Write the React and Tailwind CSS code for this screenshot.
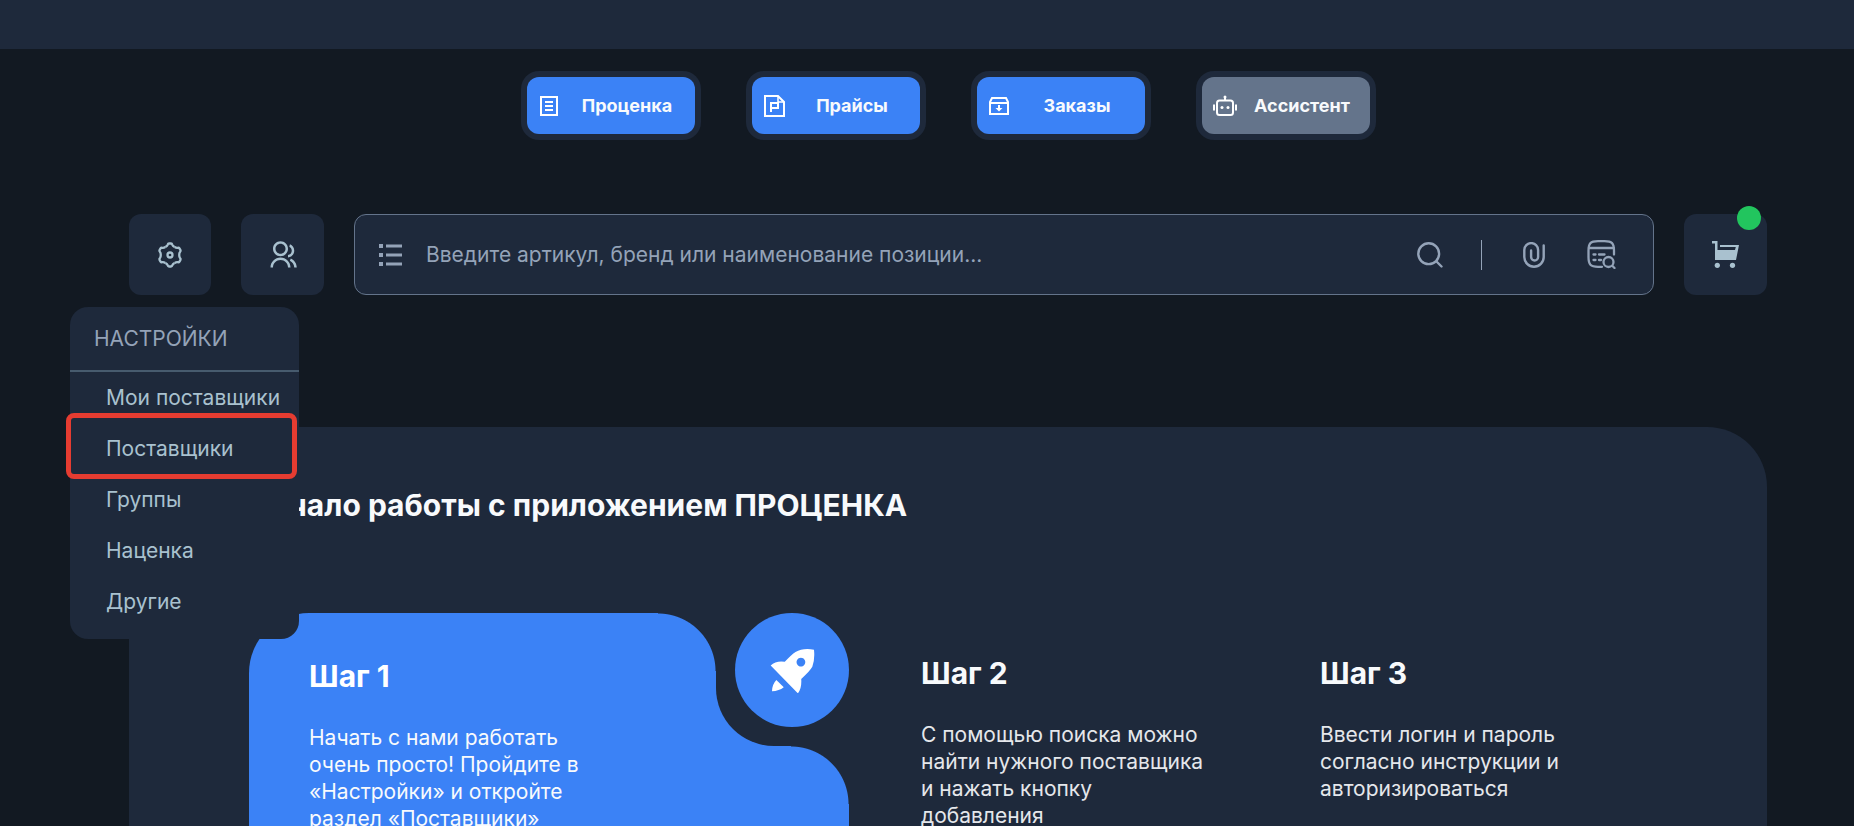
import { RiGroupLine } from "react-icons/ri";

const settingsItems = ["Мои поставщики", "Поставщики", "Группы", "Наценка", "Другие"];

function PriceListIcon() {
    return (
        <svg width="22" height="22" viewBox="0 0 22 22" fill="none" stroke="currentColor" strokeWidth="2">
            <path d="M3 2h16v18H3z" />
            <path d="M7 7h8M7 11h8M7 15h8" />
        </svg>
    );
}

function PriceFileIcon() {
    return (
        <svg width="22" height="22" viewBox="0 0 22 22" fill="none" stroke="currentColor" strokeWidth="2">
            <path d="M2 1h13L21 7v14H2z" />
            <path d="M15 1v6h6" strokeWidth="1.500" />
            <path d="M8 17V8h7v5H8" />
        </svg>
    );
}

function OrdersIcon() {
    return (
        <svg width="22" height="22" viewBox="0 0 22 22" fill="none" stroke="currentColor" strokeWidth="2">
            <path d="M2 7V19h18V7L18 3H4z" />
            <path d="M2 8h18" />
            <path d="M11 10v4" />
            <path d="M7.500 13h7L11 16.500z" fill="currentColor" stroke="none" />
        </svg>
    );
}

function RobotIcon() {
    return (
        <svg className="shrink-0" width="24" height="22" viewBox="0 0 24 22" fill="none" stroke="currentColor" strokeWidth="2">
            <rect x="4" y="5.500" width="16" height="14.500" rx="2.500" />
            <path d="M12 5V2M1 9.500v6M23 9.500v6" />
            <circle cx="12" cy="2" r="1.500" fill="currentColor" stroke="none" />
            <circle cx="9" cy="12.500" r="1.500" fill="currentColor" stroke="none" />
            <circle cx="15" cy="12.500" r="1.500" fill="currentColor" stroke="none" />
        </svg>
    );
}

function GearIcon() {
    return (
        <svg width="26" height="26" viewBox="-13 -13 26 26" fill="none" stroke="currentColor" strokeWidth="2.300">
            {[0, 60, 120, 180, 240, 300].map((angle) => (
                <path
                    key={angle}
                    transform={`rotate(${angle})`}
                    d="M-4.600 -8C-3.300 -8.700 -2.800 -9 -2.400 -10.200Q-2 -11.500 -1 -11.500H1Q2 -11.500 2.400 -10.200C2.800 -9 3.300 -8.700 4.600 -8"
                />
            ))}
            <circle r="2.500" />
        </svg>
    );
}

function ListIcon() {
    return (
        <svg width="24" height="24" viewBox="0 0 24 24" fill="currentColor">
            <path d="M0 1h4v4H0zM0 10h4v4H0zM0 19h4v4H0z" />
            <path d="M7 1.500h16v3H7zM7 10.500h16v3H7zM7 19.500h16v3H7z" />
        </svg>
    );
}

function SearchIcon() {
    return (
        <svg width="26" height="26" viewBox="0 0 26 26" fill="none" stroke="currentColor" strokeWidth="2.400" strokeLinecap="round">
            <circle cx="11.700" cy="11.700" r="10.400" />
            <path d="M19.500 19.500L24.500 24.500" />
        </svg>
    );
}

function ClipIcon() {
    return (
        <svg width="22" height="26" viewBox="0 0 22 26" fill="none" stroke="currentColor" strokeWidth="2.400" strokeLinecap="round">
            <path d="M20.700 3.500V15a9.700 9.700 0 0 1-19.400 0V8a6.900 6.900 0 0 1 13.800 0v7a3.500 3.500 0 0 1-7 0V8.500" />
        </svg>
    );
}

function DateSearchIcon() {
    return (
        <svg width="29" height="29" viewBox="0 0 29 29" fill="none" stroke="currentColor" strokeWidth="2.300" strokeLinecap="round">
            <path d="M15 26.800h-4C3.500 26.800 1.500 24.500 1.500 17v-6C1.500 3 3.500 1.200 11 1.200h6.500C25 1.200 27 3 27 11v3.500" />
            <path d="M2 8h24.500" />
            <path d="M6.500 14.500h2M12 14.500h5.500M6.500 20h2M12 20h2" />
            <circle cx="21.500" cy="22" r="5" />
            <path d="M25.500 26l2 2" />
        </svg>
    );
}

function CartIcon() {
    return (
        <svg width="27" height="27" viewBox="0 0 27 27" fill="currentColor">
            <path d="M0 0h5.500v9H23l.8-3H8V4h19l-3 15H3V2.500H0z" />
            <circle cx="5.300" cy="24.300" r="2.600" />
            <circle cx="20.500" cy="24.300" r="2.600" />
        </svg>
    );
}

function RocketIcon() {
    return (
        <svg width="45" height="45" viewBox="0 0 134 134" fill="currentColor">
            <path
                fillRule="evenodd"
                d="M131 5Q98 -1 76 12Q64 20 44 41Q18 37 2 52L83 135Q95 120 93 92Q118 70 126 56Q134 36 131 5ZM92 29a13 13 0 1 0 .1 0Z"
            />
            <path d="M19 95L41 117Q27 128 6 129Q6 108 19 95Z" />
        </svg>
    );
}

const navItems = [
    { label: "Проценка", icon: PriceListIcon, color: "bg-[#3b82f6]" },
    { label: "Прайсы", icon: PriceFileIcon, color: "bg-[#3b82f6]" },
    { label: "Заказы", icon: OrdersIcon, color: "bg-[#3b82f6]" },
    { label: "Ассистент", icon: RobotIcon, color: "bg-[#64748b]" },
];

function SettingsMenu() {
    return (
        <div className="absolute top-[93px] -left-[59px] z-10 w-[229px] rounded-[18px] bg-[#1e293b] pb-3 text-[21px] leading-7">
            <p className="h-[65px] border-b-2 border-[#475b6e] px-6 pt-[18px] text-[#94a3b8]">НАСТРОЙКИ</p>
            <ul>
                {settingsItems.map((item) => (
                    <li key={item} className="relative">
                        <a href="#" className="flex h-[51px] items-center pl-9 whitespace-nowrap text-[#a9c1cf]">
                            {item}
                        </a>
                        {item === "Поставщики" && (
                            <span className="pointer-events-none absolute -top-[10px] right-[2px] -bottom-[5px] -left-1 rounded-lg border-5 border-[#e63c31]" />
                        )}
                    </li>
                ))}
            </ul>
        </div>
    );
}

function Step({ title, children }) {
    return (
        <section className="pt-[42px] pr-10 pl-[72px]">
            <h2 className="text-3xl leading-9 font-bold text-slate-50">{title}</h2>
            <p className="mt-[30px] text-[21px] leading-[27px] text-gray-200">{children}</p>
        </section>
    );
}

function App() {
    return (
        <div className="h-screen overflow-hidden bg-[#121922] font-['Inter',sans-serif] text-white">
            <header className="h-[49px] bg-[#1e293b]" />

            <div className="pr-[87px] pl-[129px]">
                <nav className="flex justify-center gap-[45px] pt-[22px]">
                    {navItems.map(({ label, icon: Icon, color }) => (
                        <div key={label} className="rounded-[18px] bg-[#1e293b] p-[6px]">
                            <button type="button" className={`flex h-[57px] w-[168px] items-center rounded-xl ${color}`}>
                                <span className="flex w-[33px] pl-[11px]">
                                    <Icon />
                                </span>
                                <span className="flex-1 text-center text-lg font-bold text-slate-50">{label}</span>
                            </button>
                        </div>
                    ))}
                </nav>

                <div className="mt-[74px] flex h-[81px] gap-[30px]">
                    <div className="relative">
                        <button type="button" aria-label="Настройки" className="flex h-full w-[82px] items-center justify-center rounded-xl bg-[#1e293b] text-[#a9c1cf]">
                            <GearIcon />
                        </button>
                        <SettingsMenu />
                    </div>
                    <button type="button" aria-label="Клиенты" className="flex w-[83px] items-center justify-center rounded-xl bg-[#1e293b] text-[#a9c1cf]">
                        <RiGroupLine size={30} />
                    </button>

                    <form className="flex flex-1 items-center rounded-xl border border-[#64748b] bg-[#1e293b] pr-[37px] pl-6 text-[#94a3b8]">
                        <button type="button" aria-label="Список">
                            <ListIcon />
                        </button>
                        <input
                            type="text"
                            aria-label="Поиск"
                            placeholder="Введите артикул, бренд или наименование позиции..."
                            className="ml-[23px] flex-1 bg-transparent text-[21px] leading-7 outline-none placeholder:text-[#94a3b8]"
                        />
                        <button type="button" aria-label="Найти">
                            <SearchIcon />
                        </button>
                        <span className="mx-[38px] h-[30px] w-px bg-[#94a3b8]" />
                        <button type="button" aria-label="Прикрепить файл" className="mr-[42px] ml-[3px]">
                            <ClipIcon />
                        </button>
                        <button type="button" aria-label="История поиска">
                            <DateSearchIcon />
                        </button>
                    </form>

                    <button type="button" aria-label="Корзина" className="relative flex w-[83px] items-center justify-center rounded-xl bg-[#1e293b] text-[#a9c1cf]">
                        <CartIcon />
                        <span className="absolute -top-2 right-[6px] size-6 rounded-full bg-[#22c55e]" />
                    </button>
                </div>

                <main className="mt-[132px] rounded-[60px] bg-[#1e293b] px-[120px] pt-[60px] pb-[120px]">
                    <h1 className="text-3xl leading-9 font-bold text-slate-50">Начало работы с приложением ПРОЦЕНКА</h1>

                    <div className="mt-[90px] grid grid-cols-[600px_1fr_1fr]">
                        <section className="relative min-h-[400px] rounded-[60px] bg-[#3b82f6] pt-[45px] pl-[60px]">
                            {/* cut-out corner with the round badge */}
                            <div className="absolute top-0 right-0 size-[133px] rounded-bl-[58px] bg-[#1e293b]" />
                            <div className="absolute top-0 right-[133px] size-[58px] bg-[radial-gradient(circle_at_bottom_left,transparent_57px,#1e293b_58px)]" />
                            <div className="absolute top-[133px] right-0 size-[58px] bg-[radial-gradient(circle_at_bottom_left,transparent_57px,#1e293b_58px)]" />
                            <div className="absolute top-0 right-0 flex size-[114px] items-center justify-center rounded-full bg-[#3b82f6]">
                                <RocketIcon />
                            </div>

                            <h2 className="text-3xl leading-9 font-bold">Шаг 1</h2>
                            <p className="mt-[30px] w-[280px] text-[21px] leading-[27px] text-slate-50">
                                Начать с нами работать очень просто! Пройдите в «Настройки» и откройте раздел «Поставщики»
                            </p>
                        </section>

                        <Step title="Шаг 2">С помощью поиска можно найти нужного поставщика и нажать кнопку добавления</Step>
                        <Step title="Шаг 3">Ввести логин и пароль согласно инструкции и авторизироваться</Step>
                    </div>
                </main>
            </div>
        </div>
    );
}

export default App;
